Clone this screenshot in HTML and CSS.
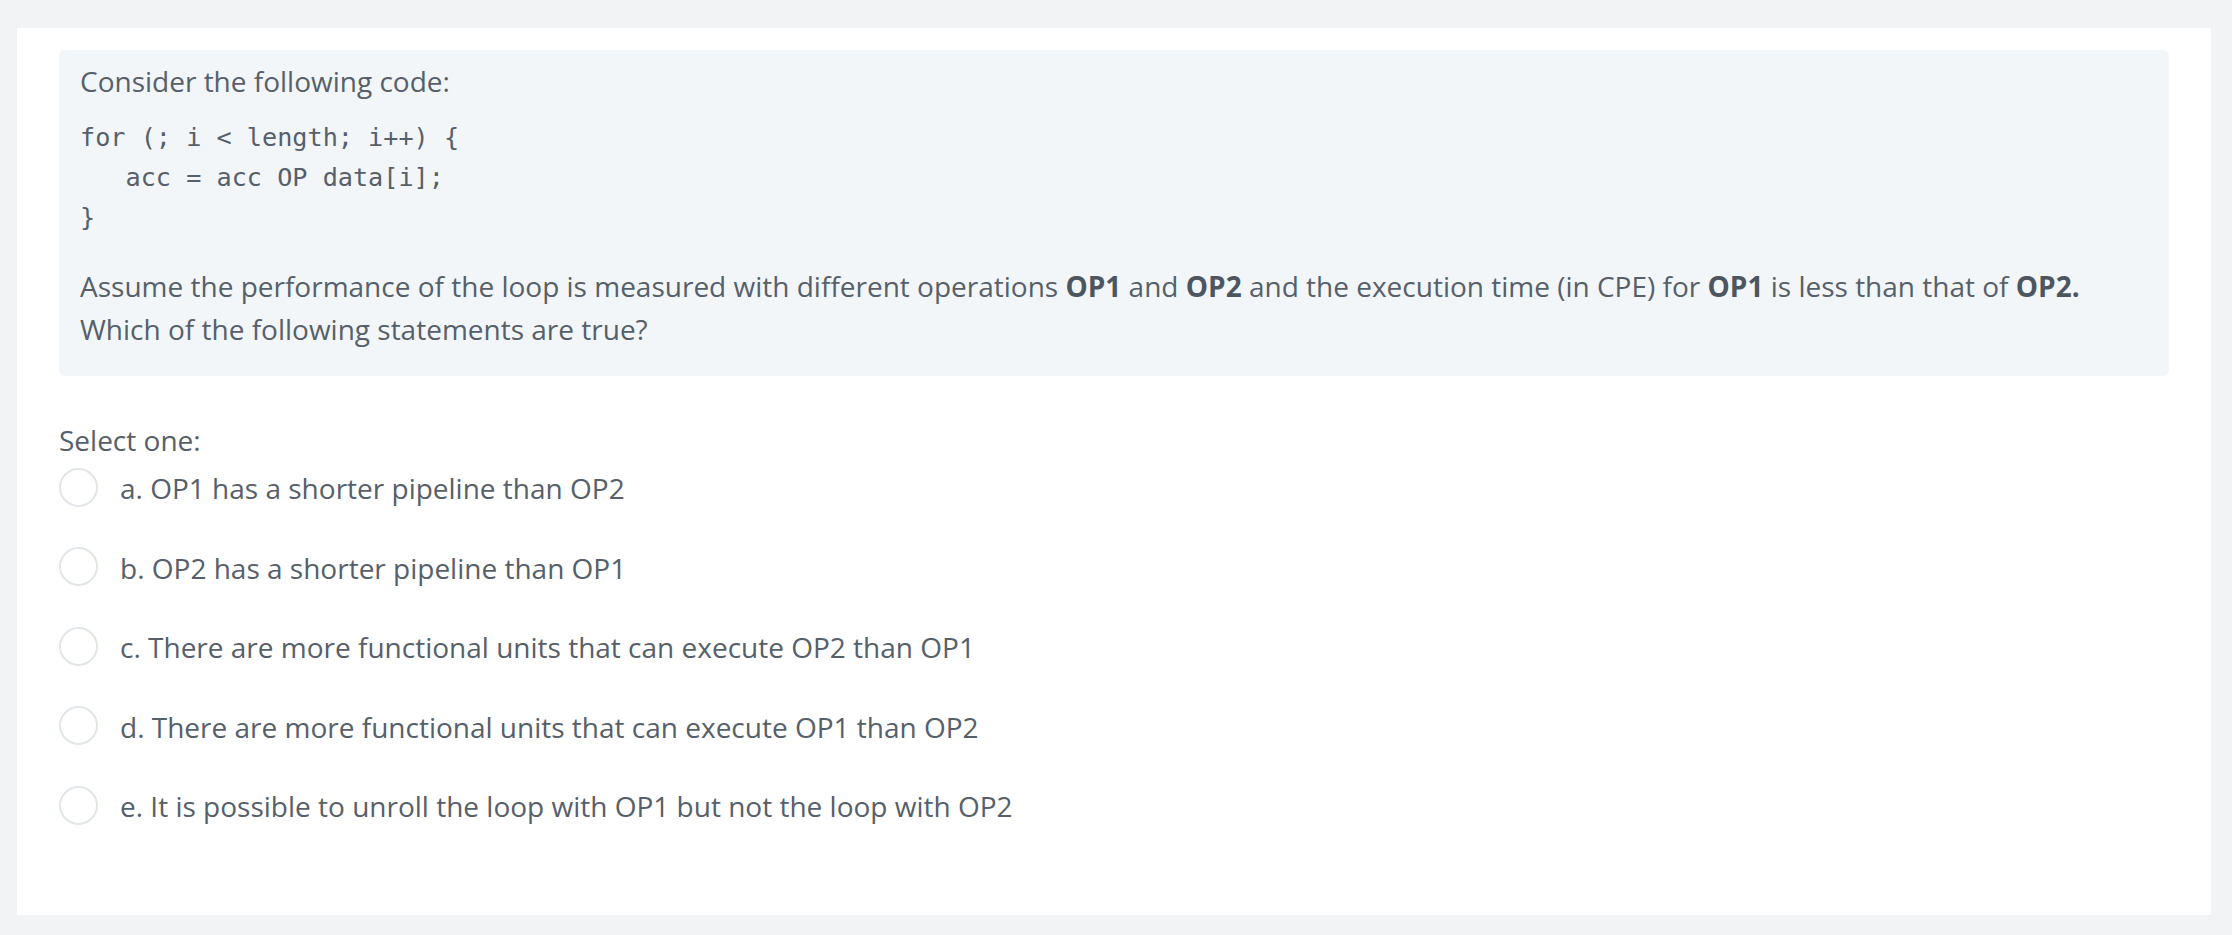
FILE: index.html
```html
<!DOCTYPE html>
<html lang="en">
<head>
<meta charset="utf-8">
<title>Question</title>
<link rel="stylesheet" href="styles.css">
</head>
<body>
<div class="card">
  <div class="formulation">
    <p class="intro">Consider the following code:</p>
    <pre class="code">for (; i &lt; length; i++) {
   acc = acc OP data[i];
}</pre>
    <p class="para">Assume the performance of the loop is measured with different operations <strong>OP1</strong> and <strong>OP2</strong> and the execution time (in CPE) for <strong>OP1</strong> is less than that of <strong>OP2.</strong><br>Which of the following statements are true?</p>
  </div>
  <div class="answer">
    <div class="prompt">Select one:</div>
    <div class="options">
      <label class="option"><span class="radio"></span><span class="label">a. OP1 has a shorter pipeline than OP2</span></label>
      <label class="option"><span class="radio"></span><span class="label">b. OP2 has a shorter pipeline than OP1</span></label>
      <label class="option"><span class="radio"></span><span class="label">c. There are more functional units that can execute OP2 than OP1</span></label>
      <label class="option"><span class="radio"></span><span class="label">d. There are more functional units that can execute OP1 than OP2</span></label>
      <label class="option"><span class="radio"></span><span class="label">e. It is possible to unroll the loop with OP1 but not the loop with OP2</span></label>
    </div>
  </div>
</div>
</body>
</html>
```
FILE: styles.css
```css
html, body {
  margin: 0;
  padding: 0;
}
body {
  background: #f2f3f5;
  padding: 28px 21px 19px 17px;
  font-family: "Open Sans", "Noto Sans", sans-serif;
  font-size: 28px;
  line-height: 43.5px;
  color: #56606a;
}
.card {
  background: #ffffff;
  padding: 22px 42px 86px 42px;
}
.formulation {
  background: #f3f6f9;
  border-radius: 6px;
  padding: 10px 21px 24px 21px;
}
.intro {
  margin: 0 0 14px 0;
}
.code {
  margin: 0 0 27px 0;
  font-family: "DejaVu Sans Mono", monospace;
  font-size: 25.2px;
  line-height: 40px;
  color: #56606a;
}
.para {
  margin: 0;
}
.para strong {
  font-weight: 700;
  color: #4d5660;
}
.answer {
  padding-top: 43px;
}
.prompt {
  margin-bottom: 5px;
}
.options {
  display: flex;
  flex-direction: column;
  gap: 36px;
}
.option {
  display: flex;
  align-items: center;
  gap: 22px;
}
.radio {
  width: 35px;
  height: 35px;
  border: 2px solid #e1e6ea;
  border-radius: 50%;
  background: #ffffff;
  flex: 0 0 auto;
  margin-top: -3px;
}
```
